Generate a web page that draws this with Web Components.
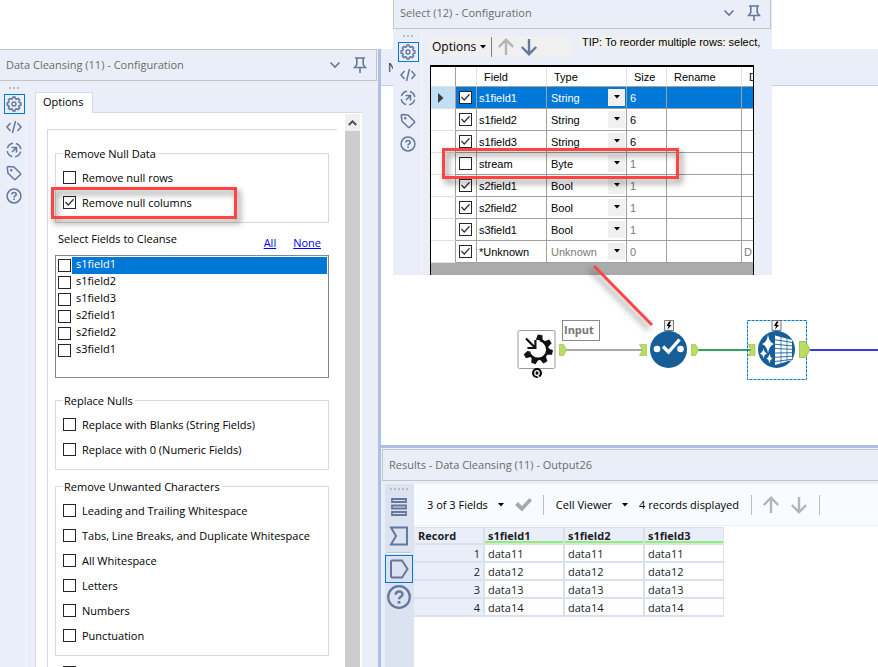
<!DOCTYPE html>
<html lang="en">
<head>
<meta charset="utf-8">
<title>Workflow designer</title>
<style>
  html, body { margin: 0; height: 100%; background: #fff; }
  body { font: 11px/16px "Open Sans", "Noto Sans", sans-serif; color: #000; overflow: hidden; }
</style>
</head>
<body>
<designer-app></designer-app>

<script>
const S = (w, h, body, extra = '') => `<svg width="${w}" height="${h}" viewBox="0 0 ${w} ${h}" fill="none" aria-hidden="true" ${extra}>${body}</svg>`;
const INK = '#66779c';
const gearPath = (() => {
  const n = 8, p = [];
  for (let i = 0; i < n; i++) {
    const a = i * 2 * Math.PI / n;
    [[-.27, 5.4], [-.17, 7], [.17, 7], [.27, 5.4]].forEach(([d, r]) =>
      p.push((8 + r * Math.sin(a + d)).toFixed(2) + ' ' + (8 - r * Math.cos(a + d)).toFixed(2)));
  }
  return 'M' + p.join('L') + 'Z';
})();
const ICON = {
  gear: S(16, 16, `<path d="${gearPath}" stroke="${INK}" stroke-width="1.5" stroke-linejoin="round"/><circle cx="8" cy="8" r="2" stroke="${INK}" stroke-width="1.4"/>`),
  code: S(16, 16, `<path d="M4.5 4L1 8l3.500 4M11.500 4L15 8l-3.500 4M9.500 2l-3 12" stroke="${INK}" stroke-width="1.5"/>`),
  run: S(16, 16, `<circle cx="8" cy="8" r="6.800" stroke="${INK}" stroke-width="1.500" stroke-dasharray="7.700 3" stroke-dashoffset="9"/><path d="M5.500 5.500h5v5M10 6L6 10" stroke="${INK}" stroke-width="1.600"/>`),
  tag: S(16, 16, `<path d="M1.200 2.500L2 1.500l6 .5 6.500 6.500a1 1 0 0 1 0 1L9.500 14.300a1 1 0 0 1-1.200 0L2 8.200z" stroke="${INK}" stroke-width="1.500" stroke-linejoin="round"/><circle cx="5.200" cy="5.200" r="1.200" fill="${INK}"/>`),
  help: S(16, 16, `<circle cx="8" cy="8" r="6.900" stroke="${INK}" stroke-width="1.500"/><path d="M5.900 6.600c0-2.800 4.300-2.700 4.300-.2 0 1.500-2.200 1.500-2.200 3M8 10.500v1.600" stroke="${INK}" stroke-width="1.600"/>`),
  chevron: S(12, 8, `<path d="M1.500 1.500L6 6l4.500-4.500" stroke="${INK}" stroke-width="1.600"/>`),
  pin: S(14, 16, `<path d="M2 1h10M3.800 1v6.500L1.500 10.500h11L10.200 7.500V1M7 10.500V16" stroke="${INK}" stroke-width="1.600"/>`),
  caret: S(6, 4, `<path d="M0 0h6L3 3.500z" fill="#000"/>`),
  up: c => S(18, 18, `<path d="M9 17V2M1.800 9L9 1.800 16.200 9" stroke="${c}" stroke-width="2.400"/>`),
  down: c => S(18, 18, `<path d="M9 1v15M1.800 9L9 16.200 16.200 9" stroke="${c}" stroke-width="2.400"/>`),
  tick: S(18, 14, `<path d="M0 7l3-3 4 4 7.500-8L17 2.500 7 13.500z" fill="#a8a8a8"/>`),
  list: S(18, 20, `<path d="M2 2h14v3H2zM2 8.500h14v3H2zM2 15h14v3H2z" stroke="${INK}" stroke-width="1.800"/>`),
  sigma: S(20, 20, `<path d="M2 1.500h16v17H2L7 10z" stroke="${INK}" stroke-width="2"/>`),
  output: S(20, 20, `<path d="M3 1.500h10L18.500 10 13 18.500H3l-1-1v-15z" stroke="${INK}" stroke-width="2"/>`),
  bigHelp: S(26, 26, `<circle cx="13" cy="13" r="10.800" stroke="${INK}" stroke-width="2.200"/><path d="M9.700 10.800c0-4.500 6.800-4.300 6.800-.5 0 2.600-3.500 2.300-3.500 5" stroke="${INK}" stroke-width="2.400"/><path d="M11.600 17h2.800v2.600h-2.800z" fill="${INK}"/>`)
};

class Base extends HTMLElement {
  constructor() { super(); this.attachShadow({ mode: 'open' }); }
  connectedCallback() {
    const t = document.createElement('template');
    t.innerHTML = `<style>
      *, *::before, *::after { box-sizing: border-box; }
      button { font: inherit; color: inherit; background: none; border: 0; padding: 0; margin: 0; display: flex; align-items: center; justify-content: center; }
      svg { display: block; flex: none; }
      ${this.css()}</style>${this.html()}`;
    this.shadowRoot.replaceChildren(t.content.cloneNode(true));
  }
  css() { return ''; }
  html() { return '<slot></slot>'; }
}

/* Tick box with its label */
customElements.define('tick-box', class extends Base {
  css() { return `
    :host { display: block; }
    label { display: flex; align-items: center; height: 100%; gap: var(--tick-gap, 6px); }
    input { appearance: none; flex: none; width: 13px; height: 13px; margin: 0; border: 1px solid #262626; background: #fff; position: relative; }
    input:checked::after { content: ""; position: absolute; inset: 1px; background: #333;
      clip-path: polygon(0 50%, 10% 38%, 36% 66%, 90% 8%, 100% 20%, 36% 88%); }
    span { flex: 1; padding: 0 0 var(--tick-lift, 0) var(--tick-pad, 0); white-space: nowrap; line-height: var(--tick-line, 17px); background: var(--tick-bg, none); }`; }
  html() {
    const on = this.hasAttribute('checked') ? 'checked' : '';
    const name = this.getAttribute('name');
    return `<label><input type="checkbox" ${on} ${name ? `aria-label="${name}"` : ''}>${name ? '' : '<span><slot></slot></span>'}</label>`;
  }
});

customElements.define('panel-header', class extends Base {
  css() { return `
    :host { display: block; }
    header { display: flex; align-items: center; height: 100%; gap: 12px; padding: 0 9px 0 6px; border: 1px solid #c4c4c4; border-left: 0; background: #eaeef9; color: #6b6b6b; }
    h2 { flex: 1; margin: 0; font: inherit; white-space: nowrap; }`; }
  html() { return `<header><h2><slot></slot></h2>${this.hasAttribute('plain') ? '' :
    `<button aria-label="Panel menu">${ICON.chevron}</button><button aria-label="Pin panel">${ICON.pin}</button>`}</header>`; }
});

customElements.define('tool-rail', class extends Base {
  css() { return `
    :host { display: block; }
    nav { display: flex; flex-direction: column; align-items: center; gap: 3px; height: 100%; padding: 6px 0 0 2px; border-right: 1px solid #f3f4f6; }
    i { width: 10px; height: 4px; background: repeating-linear-gradient(90deg, #b9bcc4 0 2px, transparent 2px 4px) top / 10px 2px no-repeat; }
    button { width: 21px; height: 20px; flex: none; }
    button[aria-pressed] { border: 1px solid #0078d7; }`; }
  html() { return `<nav aria-label="Configuration views"><i></i>
    <button aria-label="Configuration" aria-pressed="true">${ICON.gear}</button>
    <button aria-label="XML view">${ICON.code}</button>
    <button aria-label="Navigation">${ICON.run}</button>
    <button aria-label="Annotation">${ICON.tag}</button>
    <button aria-label="Help">${ICON.help}</button></nav>`; }
});

customElements.define('option-group', class extends Base {
  css() { return `
    :host { display: block; }
    fieldset { margin: 0; padding: 4px 8px 7px 7px; border: 1px solid #dadada; min-width: 0; }
    legend { margin: 0; padding: 0 2px 0 1px; line-height: 15px; }
    ::slotted(tick-box) { height: 25px; }`; }
  html() { return `<fieldset><legend>${this.getAttribute('label')}</legend><slot></slot></fieldset>`; }
});

customElements.define('field-picker', class extends Base {
  css() { return `
    :host { display: block; }
    .top { display: flex; height: 32px; align-items: center; padding: 0 8px 0 3px; }
    .top b { flex: 1; font-weight: 400; }
    a { color: #00f; margin-left: 17px; padding-top: 8px; }
    .list { height: 123px; border: 1px solid #828790; padding: 1px; background: #fff; }
    tick-box { height: 17px; padding-left: 1px; --tick-gap: 1px; --tick-pad: 4px; --tick-line: 14px; --tick-lift: 3px; }
    tick-box.sel { color: #fff; --tick-bg: #0078d7; }`; }
  html() { return `<div class="top"><b>Select Fields to Cleanse</b><a href="#all">All</a><a href="#none">None</a></div>
    <div class="list" role="group" aria-label="Select Fields to Cleanse">${
      ['s1field1', 's1field2', 's1field3', 's2field1', 's2field2', 's3field1'].map((f, i) =>
        `<tick-box class="${i ? '' : 'sel'}">${f}</tick-box>`).join('')}</div>`; }
});

customElements.define('cleansing-panel', class extends Base {
  css() { return `
    :host { display: grid; grid-template: 32px minmax(0, 1fr) / minmax(0, 1fr); background: #eaeef9; overflow: hidden; }
    panel-header { margin-right: 1px; }
    .body { display: flex; min-height: 0; }
    tool-rail { width: 27px; flex: none; }
    .tabs { flex: 1; min-width: 0; display: flex; flex-direction: column; padding: 11px 16px 0 8px; }
    .tab { align-self: flex-start; position: relative; z-index: 1; height: 21px; margin-bottom: -1px; padding: 0 8px 2px 7px; border: 1px solid #d9d9d9; border-bottom: 0; background: #fff; }
    .pane { flex: 1; min-height: 0; display: flex; background: #fff; border: 1px solid #d9d9d9; border-width: 1px 0 0 1px; padding: 1px 2px 0 0; }
    .form { flex: 1; min-width: 0; margin: 15px 8px 0 11px; padding: 16px 8px 0 7px; border: 1px solid #dadada; border-width: 1px 0 0 1px; overflow: hidden; }
    .space { margin-top: 15px; } .near { margin-top: 9px; }
    .last { height: 25px; margin: 4px 0 0 8px; }
    .bar { width: 15px; background: #cdcdcd; }
    .bar button { width: 100%; height: 17px; background: #f0f0f0; }`; }
  html() { return `<panel-header>Data Cleansing (11) - Configuration</panel-header>
    <div class="body"><tool-rail></tool-rail>
      <div class="tabs"><button class="tab" role="tab" aria-selected="true">Options</button>
        <div class="pane"><div class="form">
          <option-group label="Remove Null Data"><tick-box>Remove null rows</tick-box><tick-box checked>Remove null columns</tick-box></option-group>
          <field-picker></field-picker>
          <option-group class="space" label="Replace Nulls"><tick-box>Replace with Blanks (String Fields)</tick-box><tick-box>Replace with 0 (Numeric Fields)</tick-box></option-group>
          <option-group class="near" label="Remove Unwanted Characters">
            <tick-box>Leading and Trailing Whitespace</tick-box><tick-box>Tabs, Line Breaks, and Duplicate Whitespace</tick-box><tick-box>All Whitespace</tick-box><tick-box>Letters</tick-box><tick-box>Numbers</tick-box><tick-box>Punctuation</tick-box></option-group>
          <tick-box class="last" name="Modify case"></tick-box>
        </div>
        <div class="bar"><button aria-label="Scroll up">${S(9, 6, '<path d="M.800 5L4.500 1.300 8.200 5" stroke="#505050" stroke-width="2"/>')}</button></div></div>
      </div></div>`; }
});

customElements.define('select-panel', class extends Base {
  css() { return `
    :host { display: grid; grid-template: 29px minmax(0, 1fr) / minmax(0, 1fr); background: #eaeef9; overflow: hidden; }
    panel-header { margin: -3px 1px 0 0; border-left: 1px solid #c4c4c4; }
    .body { display: grid; grid-template-columns: 29px minmax(0, 1fr); min-height: 0; }
    .main { display: flex; flex-direction: column; min-width: 0; min-height: 0; padding: 7px 18px 0 5px; }
    .tools { display: flex; align-items: flex-start; margin-right: -4px; height: 29px; font-size: 12px; }
    .bar { display: flex; align-items: center; gap: 5px; width: 146px; height: 21px; background: #f0f0f0; padding-left: 5px; flex: none; }
    .bar button { gap: 4px; }
    .bar hr { width: 1px; height: 20px; margin: 0; border: 0; background: #808080; }
    .tip { margin: 0 0 0 6px; padding-left: 3px; flex: 1; min-width: 0; white-space: nowrap; background: #f0f0f0; font: 11px/13px "Liberation Sans", Arial, sans-serif; }
    .frame { flex: 1; min-height: 0; margin-left: 3px; overflow: hidden; background: #ababab; border: 1px solid #000; border-width: 2px 1px 0 1px; }
    table { border-collapse: separate; border-spacing: 0; table-layout: fixed; width: 347px; font: 11px/13px "Liberation Sans", Arial, sans-serif; background: #fff; }
    th, td { height: 22px; padding: 1px 0 0 2px; text-align: left; font-weight: 400; border: 1px solid #a0a0a0; border-width: 0 1px 1px 0; white-space: nowrap; }
    th { height: 20px; padding: 1px 0 0 7px; border-right-color: #e3e3e3; }
    tr > :first-child { border-right-color: #a0a0a0; padding: 0 0 0 7px; border-bottom-color: #e0e0e0; }
    tr > .tick { padding: 0 0 0 3px; }
    td.type { padding: 0 1px 0 0; }
    .drop { display: flex; position: relative; height: 20px; }
    select { appearance: none; font: inherit; color: inherit; background: none; border: 0; margin: 0; padding: 1px 20px 0 4px; width: 100%; height: 20px; border-radius: 0; }
    .drop i { position: absolute; right: 0; top: 1px; width: 17px; height: 17px; display: grid; place-items: center; background: #f0f0f0; pointer-events: none; }
    td.size { padding-left: 3px; }
    td.dim { color: #7a7a7a; }
    tr.on td { background: #0078d7; color: #fff; }
    tr.on td:first-child { background: #c1def4; }`; }
  html() {
    const rows = [['s1field1', 'String', 6], ['s1field2', 'String', 6], ['s1field3', 'String', 6], ['stream', 'Byte', 1],
      ['s2field1', 'Bool', 1], ['s2field2', 'Bool', 1], ['s3field1', 'Bool', 1], ['*Unknown', 'Unknown', 0]];
    return `<panel-header>Select (12) - Configuration</panel-header>
    <div class="body"><tool-rail></tool-rail><div class="main">
      <div class="tools"><div class="bar"><button>Options ${ICON.caret}</button><hr><button aria-label="Move up">${ICON.up('#b5b5b5')}</button><button aria-label="Move down">${ICON.down(INK)}</button></div>
      <p class="tip">TIP: To reorder multiple rows: select,</p></div>
      <div class="frame"><table><colgroup><col style="width:25px"><col style="width:21px"><col style="width:70px"><col style="width:80px"><col style="width:40px"><col style="width:75px"><col></colgroup>
      <thead><tr><th></th><th></th><th>Field</th><th>Type</th><th>Size</th><th>Rename</th><th>D</th></tr></thead>
      <tbody>${rows.map(([f, t, s], i) => `<tr class="${i ? '' : 'on'}">
        <td>${i ? '' : S(6, 10, '<path d="M0 0l5.500 5L0 10z" fill="#3b3b3b"/>')}</td>
        <td class="tick"><tick-box name="Include ${f}" ${f == 'stream' ? '' : 'checked'}></tick-box></td><td>${f}</td>
        <td class="type ${t == 'Unknown' ? 'dim' : ''}"><div class="drop"><select aria-label="Type of ${f}"><option>${t}</option></select><i>${ICON.caret}</i></div></td>
        <td class="size ${s == 6 ? '' : 'dim'}">${s}</td><td></td><td class="dim">${t == 'Unknown' ? 'D' : ''}</td></tr>`).join('')}</tbody></table></div>
    </div></div>`; }
});

/* Free canvas: tools and connections sit at their own coordinates */
customElements.define('workflow-canvas', class extends Base {
  css() { return `
    :host { display: grid; grid-template: 37px minmax(0, 1fr) / minmax(0, 1fr); overflow: hidden; background: #fff; }
    .tab { background: #eaeef9; border-bottom: 1px solid #c5d0e6; padding: 0 7px; line-height: 37px; font-size: 12px; color: #1a2a50; }
    svg { width: 100%; height: 100%; }`; }
  html() {
    const bolt = (x, y) => `<g transform="translate(${x} ${y})"><path d="M.500 .500h9v10h-9z" fill="#f4f4f4" stroke="#777"/><path d="M5 1.500L2.500 6h2L3.500 9.500 7.500 5H5.300L7 1.500z" fill="#000"/></g>`;
    const teeth = [8, 57, 102, 150, 198, 243].map(a => `<path d="M-2.300 -14.800h4.600l1.200 5.500h-7z" transform="rotate(${a})"/>`).join('');
    return `<div class="tab">New Workflow</div>
    <svg aria-label="Workflow"><g transform="translate(-381 -86)" fill="none">
      <path d="M566 350h76" stroke="#a9a9a9" stroke-width="2"/>
      <path d="M697 350h54" stroke="#2ea35a" stroke-width="2"/>
      <path d="M809 350h3000" stroke="#3838e8" stroke-width="2"/>
      <g fill="#b9dc62" stroke="#93b83f" stroke-width=".600">
        <path d="M559.500 344.500h4l3 5.500-3 5.500h-4zM639.500 344.500h7v11h-7l3-5.500zM691.500 344.500h4l3 5.500-3 5.500h-4zM748 344.500h7v11h-7l3-5.500z"/></g>
      <rect x="518" y="330.500" width="37" height="38" rx="1.500" fill="#fff" stroke="#9a9a9a"/>
      <g transform="translate(538 349.500)" fill="#111">
        ${teeth}
        <path d="M2 -9.300A9.500 9.500 0 1 1 -9.300 2" stroke="#111" stroke-width="2.800" fill="none"/>
        <path d="M-12 -11L-3 -2M-2.600 -9.500v8h-8" stroke="#111" stroke-width="2.200" fill="none"/></g>
      <circle cx="537" cy="373" r="5" fill="#000"/><text x="537" y="376" text-anchor="middle" font-size="8" font-weight="700" fill="#fff">Q</text>
      <rect x="562.500" y="320.500" width="37" height="20" fill="#fff" stroke="#8a8a8a"/>
      <text x="564" y="334" font-size="11" font-weight="700" fill="#777">Input</text>
      <circle cx="668.500" cy="349.500" r="18.500" fill="#165e98"/>
      <circle cx="657" cy="349" r="3.300" fill="#fff"/><circle cx="680.500" cy="349" r="3.300" fill="#fff"/>
      <path d="M663 346.500l5.500 5.500 11-12.500" stroke="#fff" stroke-width="3.400"/>
      ${bolt(664, 320)}
      <rect x="747.500" y="320.500" width="59" height="59" stroke="#0078d7" stroke-dasharray="3 1"/>
      <path d="M799.500 341.500h6l4.500 8-4.500 8h-6z" fill="#b9dc62" stroke="#93b83f" stroke-width=".800"/>
      <circle cx="776.500" cy="349.500" r="18.500" fill="#165e98"/>
      <g fill="#fff"><path d="M768 334.500q1 8 6 9.500-5 1.500-6 9.500-1-8-6-9.500 5-1.500 6-9.500zM763.500 348.500q.7 4 3.500 5-2.800 1-3.500 5-.7-4-3.500-5 2.800-1 3.500-5zM769.500 353.500q.7 4 3 5-2.300 1-3 5-.7-4-3-5 2.300-1 3-5z"/>
        <path d="M775 335.500l17 4.500v20l-17 5z"/></g>
      <path d="M775 339.800l18 2.700M775 344.200l18 1.800M775 348.500l18 .800M775 353l18-.300M775 357.300l18-1.200M775 361.500l18-2.300" stroke="#165e98" stroke-width=".900"/>
      <path d="M781 336.500v27M787 338.500v23" stroke="#165e98" stroke-width=".700"/>
      ${bolt(771.5, 320)}
    </g></svg>`; }
});

customElements.define('results-panel', class extends Base {
  css() { return `
    :host { display: grid; grid-template: 32px minmax(0, 1fr) / minmax(0, 1fr); background: #eaeef9; overflow: hidden; }
    panel-header { margin: 0 -1px 0 1px; border-left: 1px solid #c4c4c4; }
    .body { display: grid; grid-template-columns: 29px minmax(0, 1fr); padding: 3px 0 0 4px; min-height: 0; }
    nav { display: flex; flex-direction: column; align-items: center; background: #dbe2f0; padding: 4px 1px 0 0; }
    nav i { width: 19px; height: 2px; margin-bottom: 7px; background: repeating-linear-gradient(90deg, #b9bcc4 0 2px, transparent 2px 4px); }
    nav button { width: 28px; height: 28px; flex: none; }
    nav button.first { height: 20px; margin-bottom: 5px; }
    nav hr { width: 24px; height: 2px; margin: 2px 0 1px; border: 0; background: #c3c6cc; border-bottom: 1px solid #fff; flex: none; }
    nav button[aria-pressed] { border: 1px solid #0078d7; }
    .main { min-width: 0; background: #fff; }
    .tools { display: flex; align-items: center; height: 42px; padding-left: 13px; background: #f8fbff; border-bottom: 1px solid #eef1f6; white-space: nowrap; }
    .tools button { gap: 10px; }
    .tools hr { width: 1px; height: 20px; margin: 0 12px; border: 0; background: #b9bcc4; flex: none; }
    .tools .tick { margin-left: 11px; }
    .tools .tick + hr { margin-left: 10px; }
    .tools span { margin-left: 11px; }
    .arrows { display: flex; gap: 10px; margin: 0 -1px 0 -2px; }
    table { border-collapse: separate; border-spacing: 0; table-layout: fixed; width: 310px; margin-top: 1px; color: #1c1c28; border-top: 1px solid #d9e0ee; }
    td, th { height: 18px; padding: 2px 0 0 4px; text-align: left; line-height: 14px; border: solid #d9e0ee; border-width: 0 1px 2px 0; }
    td + td, th + th, th + td { border-left: 1px solid #d9e0ee; padding-left: 3px; }
    th { font-weight: 700; background: #eaeef9; height: 17px; padding-top: 0; line-height: 15px; }
    thead th + th { box-shadow: inset 0 -2px #8ff26f; }
    tbody th { font-weight: 400; text-align: right; padding-right: 3px; height: 18px; }`; }
  html() { return `<panel-header plain>Results - Data Cleansing (11) - Output26</panel-header>
    <div class="body"><nav aria-label="Result views"><i></i><button class="first" aria-label="Messages">${ICON.list}</button><button aria-label="Input anchor">${ICON.sigma}</button><hr>
      <button aria-label="Output anchor" aria-pressed="true">${ICON.output}</button><button aria-label="Help">${ICON.bigHelp}</button></nav>
    <div class="main"><div class="tools"><button>3 of 3 Fields ${ICON.caret}</button><button class="tick" aria-label="Apply">${ICON.tick}</button><hr>
      <button>Cell Viewer ${ICON.caret}</button><span>4 records displayed</span><hr>
      <div class="arrows"><button aria-label="Previous">${ICON.up('#b5b5b5')}</button><button aria-label="Next">${ICON.down('#b5b5b5')}</button></div><hr></div>
      <table><colgroup><col style="width:70px"><col><col><col></colgroup>
      <thead><tr><th>Record</th><th>s1field1</th><th>s1field2</th><th>s1field3</th></tr></thead>
      <tbody>${[1, 2, 3, 4].map(n => `<tr><th>${n}</th>${`<td>data1${n}</td>`.repeat(3)}</tr>`).join('')}</tbody></table></div></div>`; }
});

/* Red call-out frame drawn over the interface */
customElements.define('callout-frame', class extends Base {
  css() { return `
    :host { display: block; position: absolute; z-index: 5; pointer-events: none; filter: drop-shadow(3px 4px 3px rgba(0,0,0,.5)); }
    div { height: 100%; border: 3px solid #fb4444; }`; }
  html() { return '<div></div>'; }
});

customElements.define('designer-app', class extends Base {
  css() { return `
    :host { display: grid; position: relative; grid-template: minmax(0, 1fr) / 378px minmax(0, 1fr); height: 100vh; padding-top: 49px; box-sizing: border-box; overflow: hidden; }
    main { display: grid; grid-template-rows: minmax(0, 1fr) 218px; gap: 4px; min-width: 0; border-left: 3px solid #afbfe2; background: linear-gradient(#afbfe2, #afbfe2) 0 calc(100% - 219px) / 100% 3px no-repeat, #eaeef9; }
    select-panel { position: absolute; left: 393px; top: 0; width: 379px; height: 275px; z-index: 3; }
    .one { left: 51px; top: 187px; width: 186px; height: 32px; }
    .two { left: 442px; top: 148px; width: 237px; height: 31px; }
    .line { position: absolute; left: 580px; top: 255px; z-index: 6; pointer-events: none; filter: drop-shadow(-3px 4px 3px rgba(0,0,0,.45)); }`; }
  html() { return `<cleansing-panel></cleansing-panel>
    <main><workflow-canvas></workflow-canvas><results-panel></results-panel></main>
    <select-panel></select-panel>
    <callout-frame class="one"></callout-frame><callout-frame class="two"></callout-frame>
    ${S(80, 80, '<path d="M14 11L72 70" stroke="#fb4444" stroke-width="3"/>', 'class="line"')}`; }
});
</script>
</body>
</html>
